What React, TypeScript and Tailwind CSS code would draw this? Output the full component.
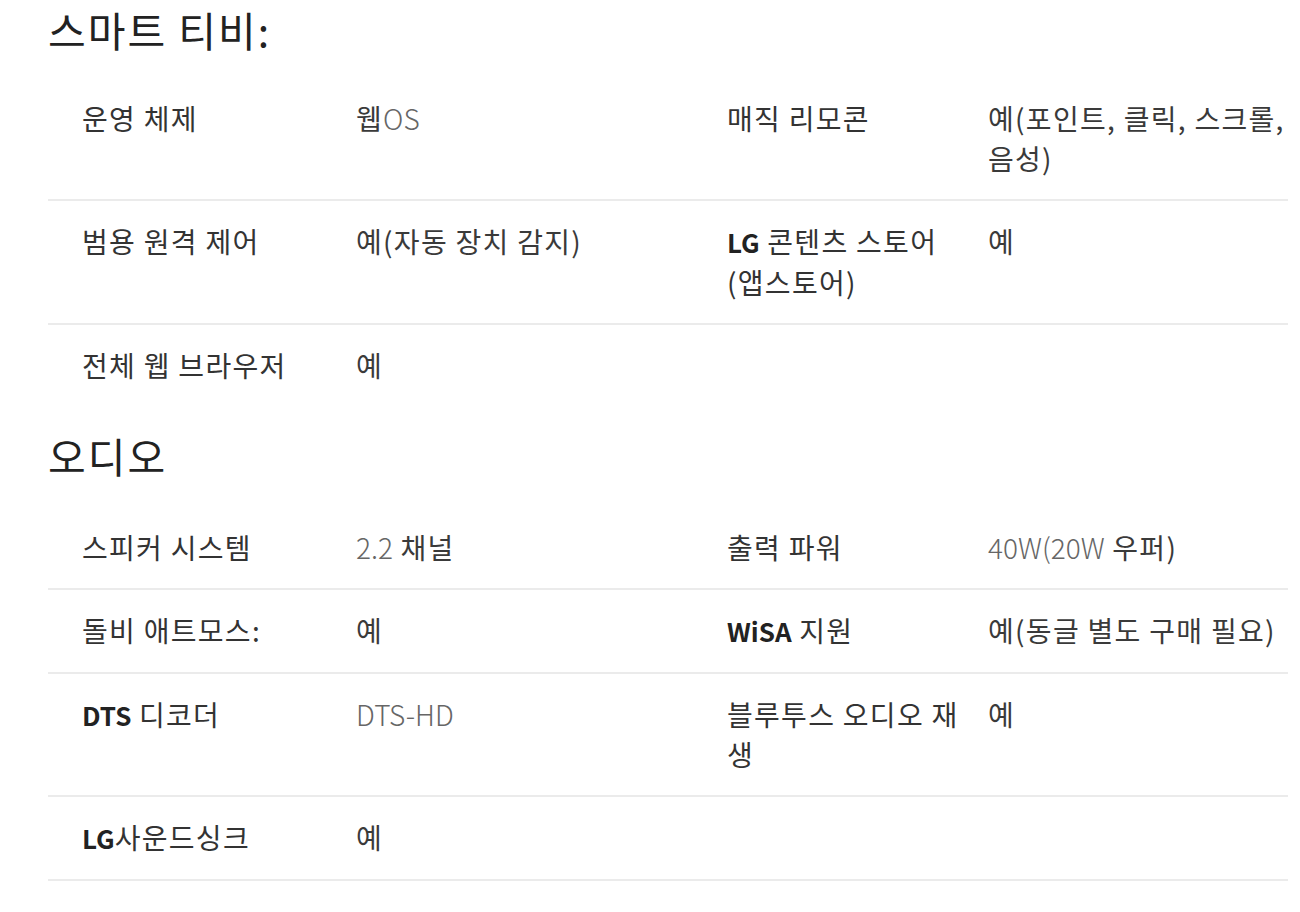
import React from "react";

type Cell = React.ReactNode;
type Row = [Cell, Cell, Cell?, Cell?];

const B = ({ children }: { children: React.ReactNode }) => (
  <span className="font-semibold text-[#222] text-[26px] tracking-normal">{children}</span>
);
const L = ({ children }: { children: React.ReactNode }) => (
  <span className="text-[#666] font-light tracking-normal">{children}</span>
);

const smart: { cells: Row; border: boolean }[] = [
  {
    cells: [
      "운영 체제",
      <>웹<L>OS</L></>,
      "매직 리모콘",
      <>예(포인트, 클릭, 스크롤,<br />음성)</>,
    ],
    border: true,
  },
  {
    cells: [
      "범용 원격 제어",
      "예(자동 장치 감지)",
      <><B>LG</B> 콘텐츠 스토어<br />(앱스토어)</>,
      "예",
    ],
    border: true,
  },
  { cells: ["전체 웹 브라우저", "예"], border: false },
];

const audio: { cells: Row; border: boolean }[] = [
  {
    cells: ["스피커 시스템", <><L>2.2</L> 채널</>, "출력 파워", <><L>40W(20W</L> 우퍼)</>],
    border: true,
  },
  {
    cells: ["돌비 애트모스:", "예", <><B>WiSA</B> 지원</>, "예(동글 별도 구매 필요)"],
    border: true,
  },
  {
    cells: [<><B>DTS</B> 디코더</>, <L>DTS-HD</L>, <>블루투스 오디오 재<br />생</>, "예"],
    border: true,
  },
  { cells: [<><B>LG</B>사운드싱크</>, "예"], border: true },
];

function Table({ rows }: { rows: { cells: Row; border: boolean }[] }) {
  return (
    <div className="flex flex-col">
      {rows.map((r, i) => (
        <div
          key={i}
          className={
            "grid grid-cols-[308px_371px_261px_300px] pt-5 pb-[21px] text-[28px] leading-[40px] tracking-[1.3px] text-[#333] whitespace-nowrap " +
            (r.border ? "border-b-2 border-[#ebebeb]" : "")
          }
        >
          <div className="pl-[34px]">{r.cells[0]}</div>
          <div className="text-[#3a3a3a]">{r.cells[1]}</div>
          <div>{r.cells[2] ?? ""}</div>
          <div className="text-[#3a3a3a]">{r.cells[3] ?? ""}</div>
        </div>
      ))}
    </div>
  );
}

export default function App() {
  return (
    <div
      className="w-[1300px] h-[912px] bg-white overflow-hidden"
      style={{ fontFamily: '"Noto Sans CJK KR", "Noto Sans", sans-serif' }}
    >
      <div className="ml-12 w-[1240px]">
        <h2 className="h-[78px] pt-[4px] text-[41px] leading-[50px] tracking-[2px] text-[#222] font-normal">
          스마트 티비:
        </h2>
        <Table rows={smart} />
        <h2 className="h-[101px] pt-[24px] text-[41px] leading-[50px] tracking-[2px] text-[#222] font-normal">
          오디오
        </h2>
        <Table rows={audio} />
      </div>
    </div>
  );
}
